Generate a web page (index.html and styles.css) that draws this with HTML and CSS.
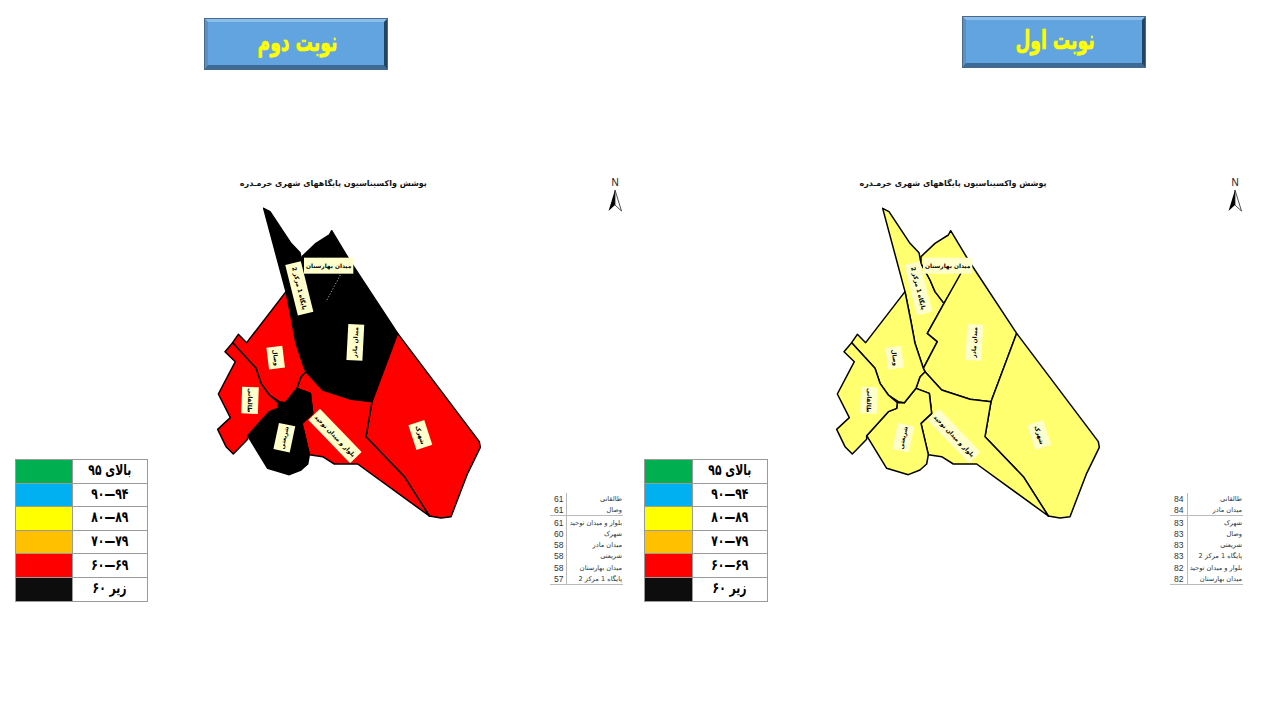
FILE: index.html
```html
<!DOCTYPE html>
<html lang="fa">

<head>
    <meta charset="UTF-8">
    <title>پوشش واکسیناسیون پایگاههای شهری خرمدره</title>
    <link rel="stylesheet" href="styles.css">
</head>

<body>
    <div class="slide">

        <!-- second round -->
        <section class="panel panel-second">
            <div class="banner"><span>نوبت دوم</span></div>
            <div class="panel-body">
                <table class="legend">
                    <tr><td class="swatch green"></td><td><span>بالای ۹۵</span></td></tr>
                    <tr><td class="swatch blue"></td><td><span>۹۰—۹۴</span></td></tr>
                    <tr><td class="swatch yellow"></td><td><span>۸۰—۸۹</span></td></tr>
                    <tr><td class="swatch orange"></td><td><span>۷۰—۷۹</span></td></tr>
                    <tr><td class="swatch red"></td><td><span>۶۰—۶۹</span></td></tr>
                    <tr><td class="swatch black"></td><td><span>زیر ۶۰</span></td></tr>
                </table>

                <svg class="map" viewBox="0 -450 870 1089">
                    <text class="map-title" x="397" y="-411">پوشش واکسیناسیون پایگاههای شهری خرمـدره</text>
                    <polygon class="area fill-black" points="188,-335 207,-325 270,-230 297,-202 303,-170 330,-120 345,-85 372,-50 322,40 352,65 310,145 285,70 272,0 255,-85" />
                    <polygon class="area fill-black" points="303,-190 345,-230 385,-255 392,-268 445,-180 425,-138 372,-50 345,-85 330,-120 303,-170" />
                    <polygon class="area fill-black" points="372,-50 445,-180 590,40 513,245 450,238 365,210 315,155 310,145 352,65 322,40" />
                    <polygon class="area fill-red" points="590,40 835,365 838,382 800,460 750,590 720,594 685,588 610,470 495,350 513,245" />
                    <polygon class="area fill-red" points="513,245 495,350 610,470 685,588 470,432 400,432 365,410 325,404 303,310 335,280 328,220 288,205 300,170 315,155 365,210 450,238" />
                    <polygon class="area fill-black" points="288,205 253,248 232,248 230,265 205,275 140,347 200,445 265,464 300,450 320,432 325,404 303,310 335,280 328,220" />
                    <polygon class="area fill-red" points="255,-85 137,68 112,43 95,68 165,145 180,190 205,225 235,245 253,248 288,205 300,170 315,155 310,145 285,70 272,0" />
                    <polygon class="area fill-red" points="95,68 72,95 103,125 52,222 88,293 50,328 75,380 97,402 140,358 140,347 205,275 230,265 232,248 205,225 180,190 165,145" />
                    <line class="seam" x1="418" y1="-135" x2="375" y2="-55" />
                    <g transform="translate(295 -95) rotate(76)"><rect class="tag" x="-78" y="-24" width="156" height="48" /><text class="tag-text">پایگاه 1 مرکز 2</text></g>
                    <g transform="translate(383 -163)"><rect class="tag" x="-74" y="-24" width="148" height="48" /><text class="tag-text">میدان بهارستان</text></g>
                    <g transform="translate(463 67) rotate(-87)"><rect class="tag" x="-54" y="-24" width="108" height="48" /><text class="tag-text">میدان مادر</text></g>
                    <g transform="translate(224 113) rotate(83)"><rect class="tag" x="-33" y="-24" width="66" height="48" /><text class="tag-text">وصال</text></g>
                    <g transform="translate(147 241) rotate(92)"><rect class="tag" x="-40" y="-25" width="80" height="50" /><text class="tag-text">طالقانی</text></g>
                    <g transform="translate(250 353) rotate(-78)"><rect class="tag" x="-40" y="-25" width="80" height="50" /><text class="tag-text">شریعتی</text></g>
                    <g transform="translate(402 348) rotate(46)"><rect class="tag" x="-90" y="-24" width="180" height="48" /><text class="tag-text">بلوار و میدان توحید</text></g>
                    <g transform="translate(658 345) rotate(72)"><rect class="tag" x="-39" y="-25" width="78" height="50" /><text class="tag-text">شهرک</text></g>
                </svg>

                <div class="side">
                    <svg class="north" viewBox="0 0 16 34" width="16" height="34">
                        <text class="north-letter" x="8" y="8">N</text>
                        <path d="M8 12 L1.5 33 L8 27 Z" fill="#000" />
                        <path d="M8 12 L14.5 33 L8 27 Z" fill="#fff" stroke="#222" stroke-width="0.8" />
                    </svg>
                    <table class="rank">
                        <tr><td class="num">61</td><td class="name">طالقانی</td></tr>
                        <tr class="split"><td class="num">61</td><td class="name">وصال</td></tr>
                        <tr><td class="num">61</td><td class="name">بلوار و میدان توحید</td></tr>
                        <tr><td class="num">60</td><td class="name">شهرک</td></tr>
                        <tr><td class="num">58</td><td class="name">میدان مادر</td></tr>
                        <tr><td class="num">58</td><td class="name">شریعتی</td></tr>
                        <tr><td class="num">58</td><td class="name">میدان بهارستان</td></tr>
                        <tr class="split"><td class="num">57</td><td class="name">پایگاه 1 مرکز 2</td></tr>
                    </table>
                </div>
            </div>
        </section>

        <!-- first round -->
        <section class="panel panel-first">
            <div class="banner"><span>نوبت اول</span></div>
            <div class="panel-body">
                <table class="legend">
                    <tr><td class="swatch green"></td><td><span>بالای ۹۵</span></td></tr>
                    <tr><td class="swatch blue"></td><td><span>۹۰—۹۴</span></td></tr>
                    <tr><td class="swatch yellow"></td><td><span>۸۰—۸۹</span></td></tr>
                    <tr><td class="swatch orange"></td><td><span>۷۰—۷۹</span></td></tr>
                    <tr><td class="swatch red"></td><td><span>۶۰—۶۹</span></td></tr>
                    <tr><td class="swatch black"></td><td><span>زیر ۶۰</span></td></tr>
                </table>

                <svg class="map" viewBox="0 -450 870 1089">
                    <text class="map-title" x="399" y="-411">پوشش واکسیناسیون پایگاههای شهری خرمـدره</text>
                    <polygon class="area fill-pale" points="188,-335 207,-325 270,-230 297,-202 303,-170 330,-120 345,-85 372,-50 322,40 352,65 310,145 285,70 272,0 255,-85" />
                    <polygon class="area fill-pale" points="303,-190 345,-230 385,-255 392,-268 445,-180 425,-138 372,-50 345,-85 330,-120 303,-170" />
                    <polygon class="area fill-pale" points="372,-50 445,-180 590,40 513,245 450,238 365,210 315,155 310,145 352,65 322,40" />
                    <polygon class="area fill-pale" points="590,40 835,365 838,382 800,460 750,590 720,594 685,588 610,470 495,350 513,245" />
                    <polygon class="area fill-pale" points="513,245 495,350 610,470 685,588 470,432 400,432 365,410 325,404 303,310 335,280 328,220 288,205 300,170 315,155 365,210 450,238" />
                    <polygon class="area fill-pale" points="288,205 253,248 232,248 230,265 205,275 140,347 200,445 265,464 300,450 320,432 325,404 303,310 335,280 328,220" />
                    <polygon class="area fill-pale" points="255,-85 137,68 112,43 95,68 165,145 180,190 205,225 235,245 253,248 288,205 300,170 315,155 310,145 285,70 272,0" />
                    <polygon class="area fill-pale" points="95,68 72,95 103,125 52,222 88,293 50,328 75,380 97,402 140,358 140,347 205,275 230,265 232,248 205,225 180,190 165,145" />
                    <g transform="translate(295 -95) rotate(76)"><rect class="tag" x="-78" y="-24" width="156" height="48" /><text class="tag-text">پایگاه 1 مرکز 2</text></g>
                    <g transform="translate(383 -163)"><rect class="tag" x="-74" y="-24" width="148" height="48" /><text class="tag-text">میدان بهارستان</text></g>
                    <g transform="translate(463 67) rotate(-87)"><rect class="tag" x="-54" y="-24" width="108" height="48" /><text class="tag-text">میدان مادر</text></g>
                    <g transform="translate(224 113) rotate(83)"><rect class="tag" x="-33" y="-24" width="66" height="48" /><text class="tag-text">وصال</text></g>
                    <g transform="translate(147 241) rotate(92)"><rect class="tag" x="-40" y="-25" width="80" height="50" /><text class="tag-text">طالقانی</text></g>
                    <g transform="translate(250 353) rotate(-78)"><rect class="tag" x="-40" y="-25" width="80" height="50" /><text class="tag-text">شریعتی</text></g>
                    <g transform="translate(402 348) rotate(46)"><rect class="tag" x="-90" y="-24" width="180" height="48" /><text class="tag-text">بلوار و میدان توحید</text></g>
                    <g transform="translate(658 345) rotate(72)"><rect class="tag" x="-39" y="-25" width="78" height="50" /><text class="tag-text">شهرک</text></g>
                </svg>

                <div class="side">
                    <svg class="north" viewBox="0 0 16 34" width="16" height="34">
                        <text class="north-letter" x="8" y="8">N</text>
                        <path d="M8 12 L1.5 33 L8 27 Z" fill="#000" />
                        <path d="M8 12 L14.5 33 L8 27 Z" fill="#fff" stroke="#222" stroke-width="0.8" />
                    </svg>
                    <table class="rank">
                        <tr><td class="num">84</td><td class="name">طالقانی</td></tr>
                        <tr class="split"><td class="num">84</td><td class="name">میدان مادر</td></tr>
                        <tr><td class="num">83</td><td class="name">شهرک</td></tr>
                        <tr><td class="num">83</td><td class="name">وصال</td></tr>
                        <tr><td class="num">83</td><td class="name">شریعتی</td></tr>
                        <tr><td class="num">83</td><td class="name">پایگاه 1 مرکز 2</td></tr>
                        <tr><td class="num">82</td><td class="name">بلوار و میدان توحید</td></tr>
                        <tr class="split"><td class="num">82</td><td class="name">میدان بهارستان</td></tr>
                    </table>
                </div>
            </div>
        </section>
    </div>
</body>

</html>
```

FILE: styles.css
```css
/* Base styles */
body {
    margin: 0;
    background-color: #fff;
    font-family: "DejaVu Sans", sans-serif;
}

.slide {
    display: flex;
    width: 1280px;
    height: 720px;
    overflow: hidden;
}

.panel-second {
    width: 629px;
    padding-top: 18px;
    box-sizing: border-box;
}

.panel-first {
    width: 651px;
    padding-top: 16px;
    box-sizing: border-box;
}

/* Bevelled round title */
.banner {
    display: flex;
    justify-content: center;
    align-items: center;
    width: 184px;
    height: 52px;
    box-sizing: border-box;
    border-style: solid;
    border-width: 4px 4px 5px 4px;
    border-color: #8dbde9 #234460 #3d6a94 #5f8fbd;
    outline: 1px solid #46698c;
    outline-offset: -1px;
    background-color: #62a4e0;
    color: #ffff00;
    font-size: 26px;
    font-weight: bold;
    direction: rtl;
}

.banner span {
    display: inline-block;
    transform: translate(1px, -2px) scaleX(0.66);
    -webkit-text-stroke: 0.6px #ffff00;
}

.panel-second .banner {
    margin-left: 204px;
    margin-bottom: 100px;
}

.panel-first .banner {
    margin-left: 333px;
    margin-bottom: 102px;
}

.panel-body {
    display: flex;
    align-items: flex-start;
    padding-left: 15px;
}

/* Colour key */
.legend {
    width: 133px;
    margin-top: 289px;
    border-collapse: collapse;
    table-layout: fixed;
}

.panel-first .legend {
    width: 124px;
}

.legend td {
    height: 23.6px;
    padding: 0;
    border: 1px solid #9a9a9a;
    box-sizing: border-box;
    text-align: center;
    color: #000;
    font-size: 15px;
    font-weight: bold;
}

.legend td span {
    display: inline-block;
    transform: translateY(-1px) scaleX(0.72);
}

.legend .swatch {
    width: 57px;
}

.panel-first .legend .swatch {
    width: 48px;
}

.green { background-color: #00b050; }
.blue { background-color: #00b0f0; }
.yellow { background-color: #ffff00; }
.orange { background-color: #ffc000; }
.red { background-color: #ff0000; }
.black { background-color: #0d0d0d; }

/* Map */
.map {
    flex: none;
    width: 290px;
    height: 363px;
    margin-left: 52.6px;
}

.panel-first .map {
    margin-left: 52px;
}

.map-title {
    font-size: 24px;
    font-weight: bold;
    fill: #111;
    text-anchor: middle;
    dominant-baseline: central;
    direction: rtl;
}

.area {
    stroke: #000;
    stroke-width: 4.5;
    stroke-linejoin: round;
}

.fill-black { fill: #000; }
.fill-red { fill: #ff0000; }
.fill-pale { fill: #ffff70; }

.seam {
    stroke: #999;
    stroke-width: 3;
    stroke-dasharray: 4 5;
}

.tag {
    fill: #ffffcc;
}

.tag-text {
    font-size: 17.5px;
    font-weight: bold;
    fill: #000;
    text-anchor: middle;
    dominant-baseline: central;
    direction: rtl;
}

/* North arrow and ranking */
.side {
    display: flex;
    flex-direction: column;
    justify-content: space-between;
    align-items: flex-end;
    flex: none;
    width: 73px;
    height: 407px;
    margin-top: 8px;
    margin-left: 59.4px;
}

.panel-first .side {
    margin-left: 60px;
}

.north-letter {
    font-family: "Liberation Sans", sans-serif;
    font-size: 10px;
    fill: #222;
    text-anchor: middle;
}

.rank {
    width: 73px;
    border-collapse: collapse;
    table-layout: fixed;
    color: #333;
    font-size: 6.6px;
}

.rank td {
    height: 11.3px;
    padding: 0;
    line-height: 10px;
    vertical-align: bottom;
    white-space: nowrap;
}

.rank .num {
    width: 17px;
    padding-right: 3px;
    box-sizing: border-box;
    border-right: 1px solid #bbb;
    text-align: right;
    font-family: "Liberation Sans", sans-serif;
    font-size: 8.5px;
}

.rank .name {
    direction: rtl;
    text-align: right;
    padding-right: 1px;
}

.rank .split td {
    border-bottom: 1px solid #bbb;
}
```
